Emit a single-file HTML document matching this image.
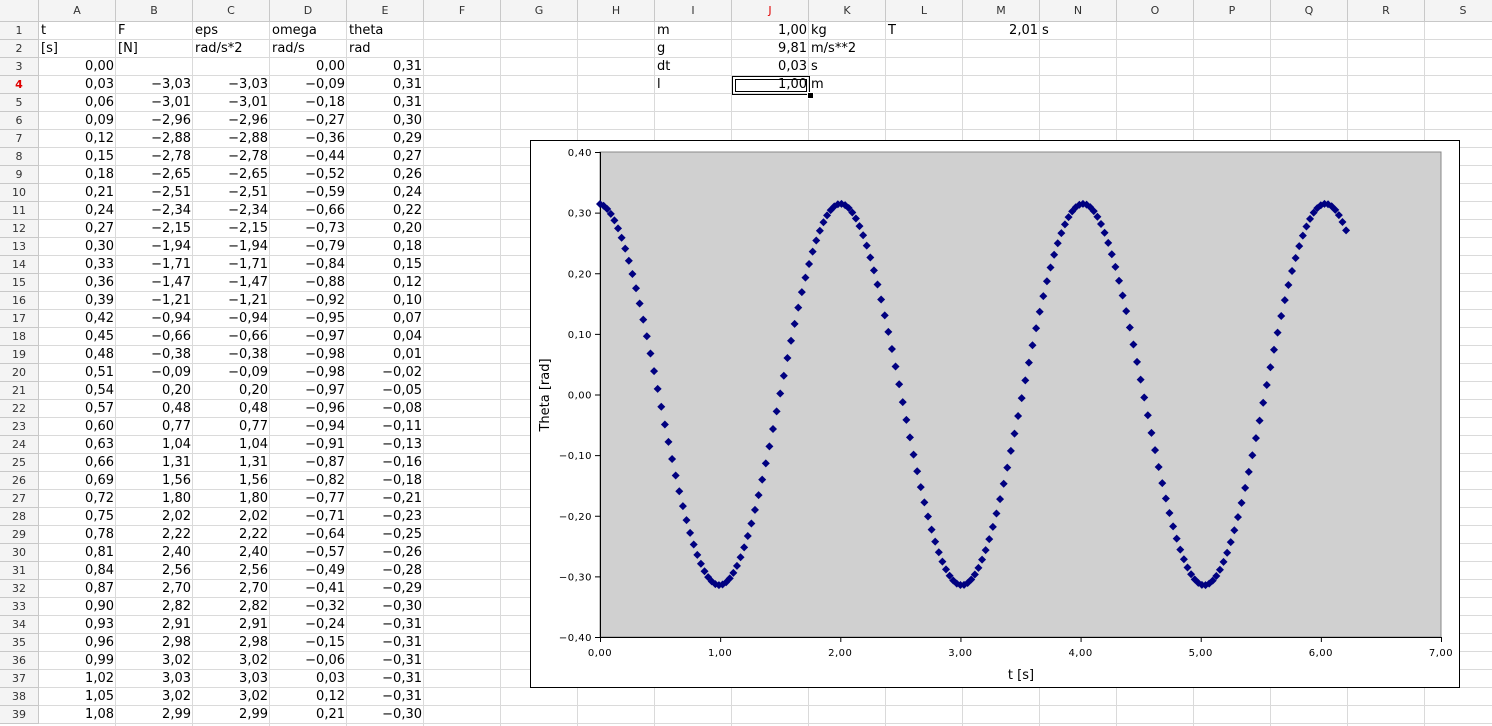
<!DOCTYPE html>
<html><head><meta charset="utf-8"><style>
body{margin:0;width:1492px;height:726px;overflow:hidden;background:#fff;font-family:"DejaVu Sans",sans-serif;position:relative}
.c{position:absolute;height:18px;line-height:18px;font-size:13px;color:#000;white-space:nowrap;box-sizing:border-box;padding:0 2px;overflow:hidden}
.r{text-align:right}
.h{position:absolute;font-size:11px;color:#333;text-align:center;background:#f4f4f4;box-sizing:border-box;border-right:1px solid #c8c8c8;border-bottom:1px solid #c8c8c8}
.vl{position:absolute;top:0;height:726px;width:1px;background:#dadada}
.hl{position:absolute;left:0;width:1492px;height:1px;background:#dadada}
</style></head><body>
<div id="g"></div>
<svg id="ch" style="position:absolute;left:0;top:0" width="1492" height="726"></svg>
<script>
var cols=[39];for(var i=1;i<=19;i++)cols.push(39+77*i);
var L="ABCDEFGHIJKLMNOPQRS";var h='';
for(var i=0;i<19;i++){h+='<div class="vl" style="left:'+(cols[i+1]-1)+'px"></div>';}
for(var r=1;r<=39;r++){h+='<div class="hl" style="top:'+(22+18*r-1)+'px"></div>';}
h+='<div class="h" style="left:0;top:0;width:39px;height:22px"></div>';
for(var i=0;i<19;i++){h+='<div class="h" style="left:'+cols[i]+'px;top:0;width:77px;height:22px;line-height:22px;'+(i==9?'color:#e00000;':'')+'">'+L[i]+'</div>';}
for(var r=1;r<=39;r++){h+='<div class="h" style="left:0;top:'+(22+18*(r-1))+'px;width:39px;height:18px;line-height:18px;'+(r==4?'color:#e00000;font-weight:bold;':'')+'">'+r+'</div>';}
function cell(c,r,t,right){h+='<div class="c'+(right?' r':'')+'" style="left:'+cols[c]+'px;top:'+(22+18*(r-1))+'px;width:77px">'+t+'</div>';}
function f(v){var s=v.toFixed(2);if(s=="-0.00")s="0.00";return s.replace('.',',').replace('-','\u2212');}
var hd=[["t","F","eps","omega","theta"],["[s]","[N]","rad/s*2","rad/s","rad"]];
for(var r=0;r<2;r++)for(var c=0;c<5;c++)cell(c,r+1,hd[r][c]);
var g=9.81,dt=0.03,th=Math.PI/10,om=0,t=0,pts=[[0,th]];
cell(0,3,"0,00",1);cell(3,3,"0,00",1);cell(4,3,f(th),1);
for(var k=1;k<=207;k++){var F=-g*Math.sin(th);om+=F*dt;th+=om*dt;t=k*dt;pts.push([t,th]);
 if(k+3<=39){var r=k+3;cell(0,r,f(t),1);cell(1,r,f(F),1);cell(2,r,f(F),1);cell(3,r,f(om),1);cell(4,r,f(th),1);}}
var lab=[["m","1,00","kg"],["g","9,81","m/s**2"],["dt","0,03","s"],["l","1,00","m"]];
for(var r=0;r<4;r++){cell(8,r+1,lab[r][0]);cell(9,r+1,lab[r][1],1);cell(10,r+1,lab[r][2]);}
cell(11,1,"T");cell(12,1,"2,01",1);cell(13,1,"s");
h+='<div style="position:absolute;left:732px;top:76px;width:78px;height:19px;border:1px solid #000;outline:1px solid #000;outline-offset:-4px;box-sizing:border-box"></div>';
h+='<div style="position:absolute;left:807px;top:92px;width:5px;height:5px;background:#000;border:1px solid #fff"></div>';
document.getElementById('g').innerHTML=h;
var s='<rect x="530.5" y="140.5" width="929" height="547" fill="#fff" stroke="#000"/>';
var X0=600,X1=1441,Y0=152,Y1=637;
s+='<rect x="'+X0+'" y="'+Y0+'" width="'+(X1-X0)+'" height="'+(Y1-Y0)+'" fill="#d0d0d0" stroke="#888"/>';
s+='<line x1="600.5" y1="152" x2="600.5" y2="638" stroke="#000"/><line x1="600" y1="637.5" x2="1441" y2="637.5" stroke="#000"/>';
for(var i=0;i<=8;i++){var v=0.4-i*0.1,y=Y0+(Y1-Y0)*i/8;s+='<line x1="595" x2="600" y1="'+(y+.5)+'" y2="'+(y+.5)+'" stroke="#000"/><text x="592" y="'+(y+4)+'" text-anchor="end" font-size="10" font-family="DejaVu Sans" letter-spacing="0.5">'+f(v)+'</text>';}
for(var i=0;i<=7;i++){var x=X0+(X1-X0)*i/7;s+='<line y1="637" y2="642" x1="'+(x+.5)+'" x2="'+(x+.5)+'" stroke="#000"/><text x="'+x+'" y="656" text-anchor="middle" font-size="10" font-family="DejaVu Sans" letter-spacing="0.5">'+f(i)+'</text>';}
s+='<text x="1021" y="679" text-anchor="middle" font-size="13" font-family="DejaVu Sans">t [s]</text>';
s+='<text transform="translate(549,395) rotate(-90)" text-anchor="middle" font-size="13" font-family="DejaVu Sans">Theta [rad]</text>';
for(var i=0;i<pts.length;i++){var x=X0+pts[i][0]*(X1-X0)/7,y=Y0+(0.4-pts[i][1])*(Y1-Y0)/0.8;
 s+='<path d="M'+x+' '+(y-4)+'L'+(x+4)+' '+y+'L'+x+' '+(y+4)+'L'+(x-4)+' '+y+'Z" fill="#000080"/>';}
document.getElementById('ch').innerHTML=s;
</script>
</body></html>
